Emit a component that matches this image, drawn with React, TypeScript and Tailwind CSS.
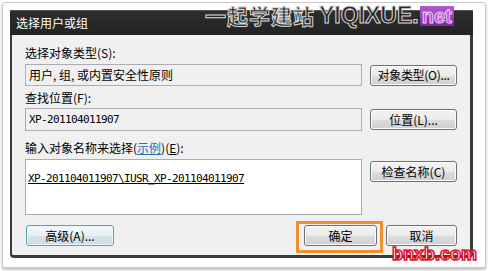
import React from "react";

const cjk = { fontFamily: '"Noto Sans CJK SC", "Noto Sans", sans-serif' };
const mono = { fontFamily: '"DejaVu Sans Mono", "Liberation Mono", monospace' };

function WinButton({
  children,
  className = "",
  hot = false,
}: {
  children: React.ReactNode;
  className?: string;
  hot?: boolean;
}) {
  return (
    <div
      className={
        "flex items-center justify-center rounded-[3px] border text-[12px] leading-none text-black " +
        (hot
          ? "border-[#5aa3b8] bg-[linear-gradient(#f4f9fb_0%,#e6f0f3_50%,#d3e3e8_51%,#cddfe4_100%)] shadow-[inset_0_0_0_1px_#e8f6fa] "
          : "border-[#707070] bg-[linear-gradient(#f3f3f3_0%,#ebebeb_50%,#dddddd_51%,#cfcfcf_100%)] shadow-[inset_0_0_0_1px_#fbfbfb] ") +
        className
      }
      style={cjk}
    >
      {children}
    </div>
  );
}

export default function App() {
  return (
    <div className="h-[271px] w-[488px] overflow-hidden bg-white pl-[2px] pr-[2px] pt-[2px]">
      <div className="relative h-[266px] w-[484px] rounded-[3px] border border-[#c9c9c9] bg-white pb-[9px] pl-[7px] pr-[12px] pt-[7px] shadow-[0_2px_3px_rgba(0,0,0,0.25)]">
        {/* dialog */}
        <div className="relative flex h-[248px] w-[463px] flex-col">
          {/* title bar */}
          <div className="flex h-[25px] items-center bg-[linear-gradient(#2e2e2e,#232323)] pl-[6px] shadow-[inset_0_1px_0_#555]">
            <span className="text-[12px] leading-none text-white" style={cjk}>
              选择用户或组
            </span>
          </div>
          {/* content */}
          <div className="flex h-[223px] flex-col rounded-b-[4px] border-b-[3px] border-l-[2px] border-r-[3px] border-[#3a3a3a] bg-[#f0f0f0] pb-[9px] pl-[13px] pr-[13px] pt-[10px]">
            <div className="flex h-[16px] items-center text-[12px] leading-none text-black" style={cjk}>
              选择对象类型(S):
            </div>
            <div className="mt-[3px] flex h-[22px] items-center gap-[8px]">
              <div
                className="flex h-[22px] w-[337px] items-center border border-[#abadb3] bg-[#f0f0f0] pl-[3px] text-[12px] leading-none text-black"
                style={cjk}
              >
                用户, 组, 或内置安全性原则
              </div>
              <WinButton className="h-[21px] w-[87px] tracking-[-0.3px]">对象类型(O)...</WinButton>
            </div>
            <div className="mt-[4px] flex h-[16px] items-center text-[12px] leading-none text-black" style={cjk}>
              查找位置(F):
            </div>
            <div className="mt-[2px] flex h-[23px] items-center gap-[8px]">
              <div className="flex h-[23px] w-[337px] items-center border border-[#abadb3] bg-[#f0f0f0] pl-[3px]">
                <span className="text-[11px] leading-none tracking-[-0.62px] text-black" style={mono}>
                  XP-201104011907
                </span>
              </div>
              <WinButton className="h-[21px] w-[87px]">位置(L)...</WinButton>
            </div>
            <div className="mt-[9px] flex h-[16px] items-center text-[12px] leading-none text-black" style={cjk}>
              输入对象名称来选择(<span className="text-[#2a6fb0] underline">示例</span>)(<span className="underline">E</span>):
            </div>
            <div className="mt-[3px] flex h-[56px] items-start gap-[8px]">
              <div className="h-[56px] w-[337px] border border-[#abadb3] bg-white pl-[2px] pt-[4px]">
                <span className="text-[11px] leading-none tracking-[-0.62px] text-black underline" style={mono}>
                  XP-201104011907\IUSR_XP-201104011907
                </span>
              </div>
              <WinButton className="mt-[2px] h-[21px] w-[87px]">检查名称(C)</WinButton>
            </div>
            <div className="mt-[10px] flex h-[21px] items-center">
              <WinButton hot className="ml-[1px] h-[21px] w-[88px]">
                高级(A)...
              </WinButton>
              <div className="relative ml-[190px]">
                <WinButton className="h-[21px] w-[73px]">确定</WinButton>
                <div className="pointer-events-none absolute -bottom-[7px] -left-[8px] -right-[6px] -top-[4px] border-[3px] border-[#f0902a]" />
              </div>
              <WinButton className="ml-[9px] h-[21px] w-[71px]">取消</WinButton>
            </div>
          </div>
          {/* title watermark */}
          <div className="pointer-events-none absolute left-[195px] top-[-6px] flex items-center">
            <span
              className="text-[21px] font-bold leading-none tracking-[1px] text-[#262626] [-webkit-text-stroke:1px_#d8d8d8]"
              style={cjk}
            >
              一起学建站
            </span>
            <span
              className="ml-[4px] text-[23px] font-bold leading-none text-[#262626] [-webkit-text-stroke:1px_#d8d8d8]"
              style={{ fontFamily: '"Liberation Sans", Arial, sans-serif' }}
            >
              YIQIXUE.
            </span>
            <span
              className="ml-[1px] flex h-[20px] items-center bg-[linear-gradient(#b35ad0,#7a2a9a)] px-[2px] text-[20px] font-bold leading-none text-[#b04fd0] [-webkit-text-stroke:1px_#f3c8ff]"
              style={{ fontFamily: '"Liberation Sans", Arial, sans-serif' }}
            >
              net
            </span>
          </div>
        </div>
        {/* bottom watermark */}
        <div
          className="pointer-events-none absolute left-[389px] top-[242px] text-[18px] font-bold leading-none text-white [-webkit-text-stroke:1.5px_#e0102a]"
          style={{ fontFamily: '"Liberation Sans", Arial, sans-serif' }}
        >
          bnxb.com
        </div>
      </div>
    </div>
  );
}
